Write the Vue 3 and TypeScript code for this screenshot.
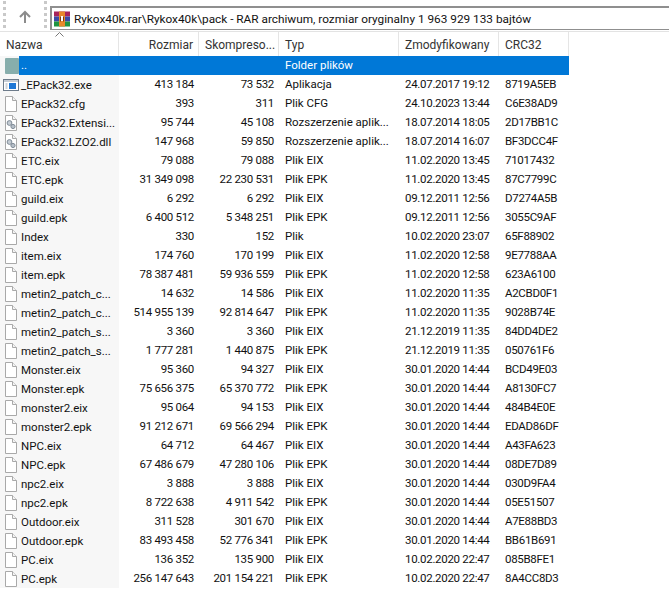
<script setup lang="ts">
interface Row {
  name: string;
  size: string;
  packed: string;
  type: string;
  date: string;
  crc: string;
  icon: 'exe' | 'dll' | 'file';
}

const columns = [
  { label: 'Nazwa', cls: 'left' },
  { label: 'Rozmiar', cls: 'right' },
  { label: 'Skompreso...', cls: 'left' },
  { label: 'Typ', cls: 'left' },
  { label: 'Zmodyfikowany', cls: 'left' },
  { label: 'CRC32', cls: 'left' },
];

const row = (name: string, size: string, packed: string, type: string, date: string, crc: string, icon: Row['icon'] = 'file'): Row => ({
  name, size, packed, type, date, crc, icon,
});

const rows: Row[] = [
  row('_EPack32.exe', '413 184', '73 532', 'Aplikacja', '24.07.2017 19:12', '8719A5EB', 'exe'),
  row('EPack32.cfg', '393', '311', 'Plik CFG', '24.10.2023 13:44', 'C6E38AD9'),
  row('EPack32.Extensi...', '95 744', '45 108', 'Rozszerzenie aplik...', '18.07.2014 18:05', '2D17BB1C', 'dll'),
  row('EPack32.LZO2.dll', '147 968', '59 850', 'Rozszerzenie aplik...', '18.07.2014 16:07', 'BF3DCC4F', 'dll'),
  row('ETC.eix', '79 088', '79 088', 'Plik EIX', '11.02.2020 13:45', '71017432'),
  row('ETC.epk', '31 349 098', '22 230 531', 'Plik EPK', '11.02.2020 13:45', '87C7799C'),
  row('guild.eix', '6 292', '6 292', 'Plik EIX', '09.12.2011 12:56', 'D7274A5B'),
  row('guild.epk', '6 400 512', '5 348 251', 'Plik EPK', '09.12.2011 12:56', '3055C9AF'),
  row('Index', '330', '152', 'Plik', '10.02.2020 23:07', '65F88902'),
  row('item.eix', '174 760', '170 199', 'Plik EIX', '11.02.2020 12:58', '9E7788AA'),
  row('item.epk', '78 387 481', '59 936 559', 'Plik EPK', '11.02.2020 12:58', '623A6100'),
  row('metin2_patch_c...', '14 632', '14 586', 'Plik EIX', '11.02.2020 11:35', 'A2CBD0F1'),
  row('metin2_patch_c...', '514 955 139', '92 814 647', 'Plik EPK', '11.02.2020 11:35', '9028B74E'),
  row('metin2_patch_s...', '3 360', '3 360', 'Plik EIX', '21.12.2019 11:35', '84DD4DE2'),
  row('metin2_patch_s...', '1 777 281', '1 440 875', 'Plik EPK', '21.12.2019 11:35', '050761F6'),
  row('Monster.eix', '95 360', '94 327', 'Plik EIX', '30.01.2020 14:44', 'BCD49E03'),
  row('Monster.epk', '75 656 375', '65 370 772', 'Plik EPK', '30.01.2020 14:44', 'A8130FC7'),
  row('monster2.eix', '95 064', '94 153', 'Plik EIX', '30.01.2020 14:44', '484B4E0E'),
  row('monster2.epk', '91 212 671', '69 566 294', 'Plik EPK', '30.01.2020 14:44', 'EDAD86DF'),
  row('NPC.eix', '64 712', '64 467', 'Plik EIX', '30.01.2020 14:44', 'A43FA623'),
  row('NPC.epk', '67 486 679', '47 280 106', 'Plik EPK', '30.01.2020 14:44', '08DE7D89'),
  row('npc2.eix', '3 888', '3 888', 'Plik EIX', '30.01.2020 14:44', '030D9FA4'),
  row('npc2.epk', '8 722 638', '4 911 542', 'Plik EPK', '30.01.2020 14:44', '05E51507'),
  row('Outdoor.eix', '311 528', '301 670', 'Plik EIX', '30.01.2020 14:44', 'A7E88BD3'),
  row('Outdoor.epk', '83 493 458', '52 776 341', 'Plik EPK', '30.01.2020 14:44', 'BB61B691'),
  row('PC.eix', '136 352', '135 900', 'Plik EIX', '10.02.2020 22:47', '085B8FE1'),
  row('PC.epk', '256 147 643', '201 154 221', 'Plik EPK', '10.02.2020 22:47', '8A4CC8D3'),
];
</script>

<template>
  <div class="window">
    <div class="toolbar">
      <span class="grip"></span>
      <div class="up-btn">
        <svg width="14" height="14" viewBox="0 0 14 14">
          <path d="M7 13V2M2 7l5-5 5 5" fill="none" stroke="#8c8c8c" stroke-width="2" />
        </svg>
      </div>
      <span class="grip"></span>
      <div class="address">
        <svg class="rar-icon" width="16" height="16" viewBox="0 0 16 16">
          <rect x="0" y="0.5" width="16" height="5" fill="#a8245c" />
          <rect x="0" y="5.5" width="16" height="5" fill="#3b4aa6" />
          <rect x="0" y="10.5" width="16" height="5" fill="#1f9440" />
          <rect x="5" y="0.5" width="6" height="15" fill="#e8892b" />
          <rect x="6.5" y="5" width="3" height="5" fill="#fff" />
          <path d="M6 5.5h1v5H6zM9 5.5h1v5H9z" fill="#7a3b10" />
        </svg>
        <span>Rykox40k.rar\Rykox40k\pack - RAR archiwum, rozmiar oryginalny 1 963 929 133 bajtów</span>
      </div>
    </div>

    <div class="list">
      <svg class="sort-arrow" width="9" height="5" viewBox="0 0 9 5">
        <path d="M.5 4.5l4-4 4 4" fill="none" stroke="#777" />
      </svg>
      <div class="header grid">
        <div v-for="col in columns" :key="col.label" class="head-cell" :class="col.cls">{{ col.label }}</div>
      </div>

      <div class="item grid selected">
        <div class="cell name parent">
          <span class="folder"></span>
          <span class="parent-label">..</span>
        </div>
        <div class="cell"></div>
        <div class="cell"></div>
        <div class="cell">Folder plików</div>
        <div class="cell"></div>
        <div class="cell"></div>
      </div>

      <div v-for="(r, i) in rows" :key="i" class="item grid">
        <div class="cell name">
          <svg v-if="r.icon === 'exe'" class="icon" width="16" height="16" viewBox="0 0 16 16">
            <rect x="0.5" y="2.5" width="15" height="11" fill="#fff" stroke="#6d7b8a" />
            <rect x="1" y="3" width="14" height="2" fill="#c5ccd4" />
            <rect x="6" y="6" width="7" height="6" fill="#1f78d6" />
            <path d="M2.5 7h2M2.5 9h2M2.5 11h2" stroke="#9aa5b1" />
          </svg>
          <svg v-else class="icon" width="16" height="16" viewBox="0 0 16 16">
            <path d="M2.5.5h7l4 4v11h-11z" fill="#fff" stroke="#a9a9a9" />
            <path d="M9.5.5v4h4" fill="#f4f4f4" stroke="#a9a9a9" />
            <template v-if="r.icon === 'dll'">
              <circle cx="6.5" cy="8" r="2.4" fill="#c4ccd4" stroke="#7f8b97" />
              <circle cx="10" cy="11.5" r="2.1" fill="#b6bfc8" stroke="#7f8b97" />
            </template>
          </svg>
          <span class="label">{{ r.name }}</span>
        </div>
        <div class="cell right num">{{ r.size }}</div>
        <div class="cell right num">{{ r.packed }}</div>
        <div class="cell">{{ r.type }}</div>
        <div class="cell num">{{ r.date }}</div>
        <div class="cell num">{{ r.crc }}</div>
      </div>
    </div>
  </div>
</template>

<style scoped>
.window {
  width: 669px;
  height: 589px;
  overflow: hidden;
  background: #fff;
  font-family: Roboto, "Open Sans", sans-serif;
  font-size: 11.5px;
  color: #111;
}

.toolbar {
  display: flex;
  align-items: flex-start;
  height: 32px;
  border-bottom: 1px solid #e3e3e3;
  box-sizing: border-box;
  padding-left: 3px;
}

.grip {
  width: 3px;
  height: 30px;
  margin-top: 1px;
  background-image: linear-gradient(#c9c9c9 50%, transparent 50%);
  background-size: 3px 6px;
}

.up-btn {
  width: 38px;
  height: 31px;
  display: flex;
  align-items: center;
  justify-content: center;
  padding-top: 2px;
  box-sizing: border-box;
}

.address {
  flex: 1;
  display: flex;
  align-items: center;
  gap: 4px;
  height: 24px;
  margin-top: 6px;
  margin-left: 3px;
  padding-left: 2px;
  border: 1px solid #8f8f8f;
  border-width: 2px 0 1px 2px;
  box-sizing: border-box;
  font-size: 11.8px;
}

.list {
  position: relative;
}

.sort-arrow {
  position: absolute;
  left: 55px;
  top: 0;
}

.grid {
  display: grid;
  grid-template-columns: 119px 80px 80px 120px 100px 70px;
  width: 569px;
}

.header {
  height: 24px;
  align-items: stretch;
  font-size: 12px;
}

.head-cell {
  display: flex;
  align-items: center;
  padding: 1px 5px 0 6px;
  border-right: 1px solid #e5e5e5;
  color: #333;
  white-space: nowrap;
  overflow: hidden;
}

.head-cell.right {
  justify-content: flex-end;
}

.item {
  height: 19px;
  line-height: 18px;
}

.cell {
  padding: 0 0 0 6px;
  white-space: nowrap;
  overflow: hidden;
}

.cell.num {
  letter-spacing: -0.3px;
}

.cell.right {
  text-align: right;
  padding-right: 5px;
}

.cell.name {
  display: flex;
  align-items: center;
  padding: 0 0 0 3px;
  background: #f7f7f7;
}

.icon {
  flex: none;
  margin-right: 2px;
}

.label {
  white-space: nowrap;
}

.selected {
  background: #0078d7;
  color: #fff;
}

.parent {
  position: relative;
  background: #f7f7f7;
}

.folder {
  flex: none;
  width: 14px;
  height: 16px;
  margin-left: 2px;
  background: #87aeac;
  border-radius: 1px;
}

.parent-label {
  flex: 1;
  height: 19px;
  background: #0078d7;
  padding-left: 2px;
}
</style>
